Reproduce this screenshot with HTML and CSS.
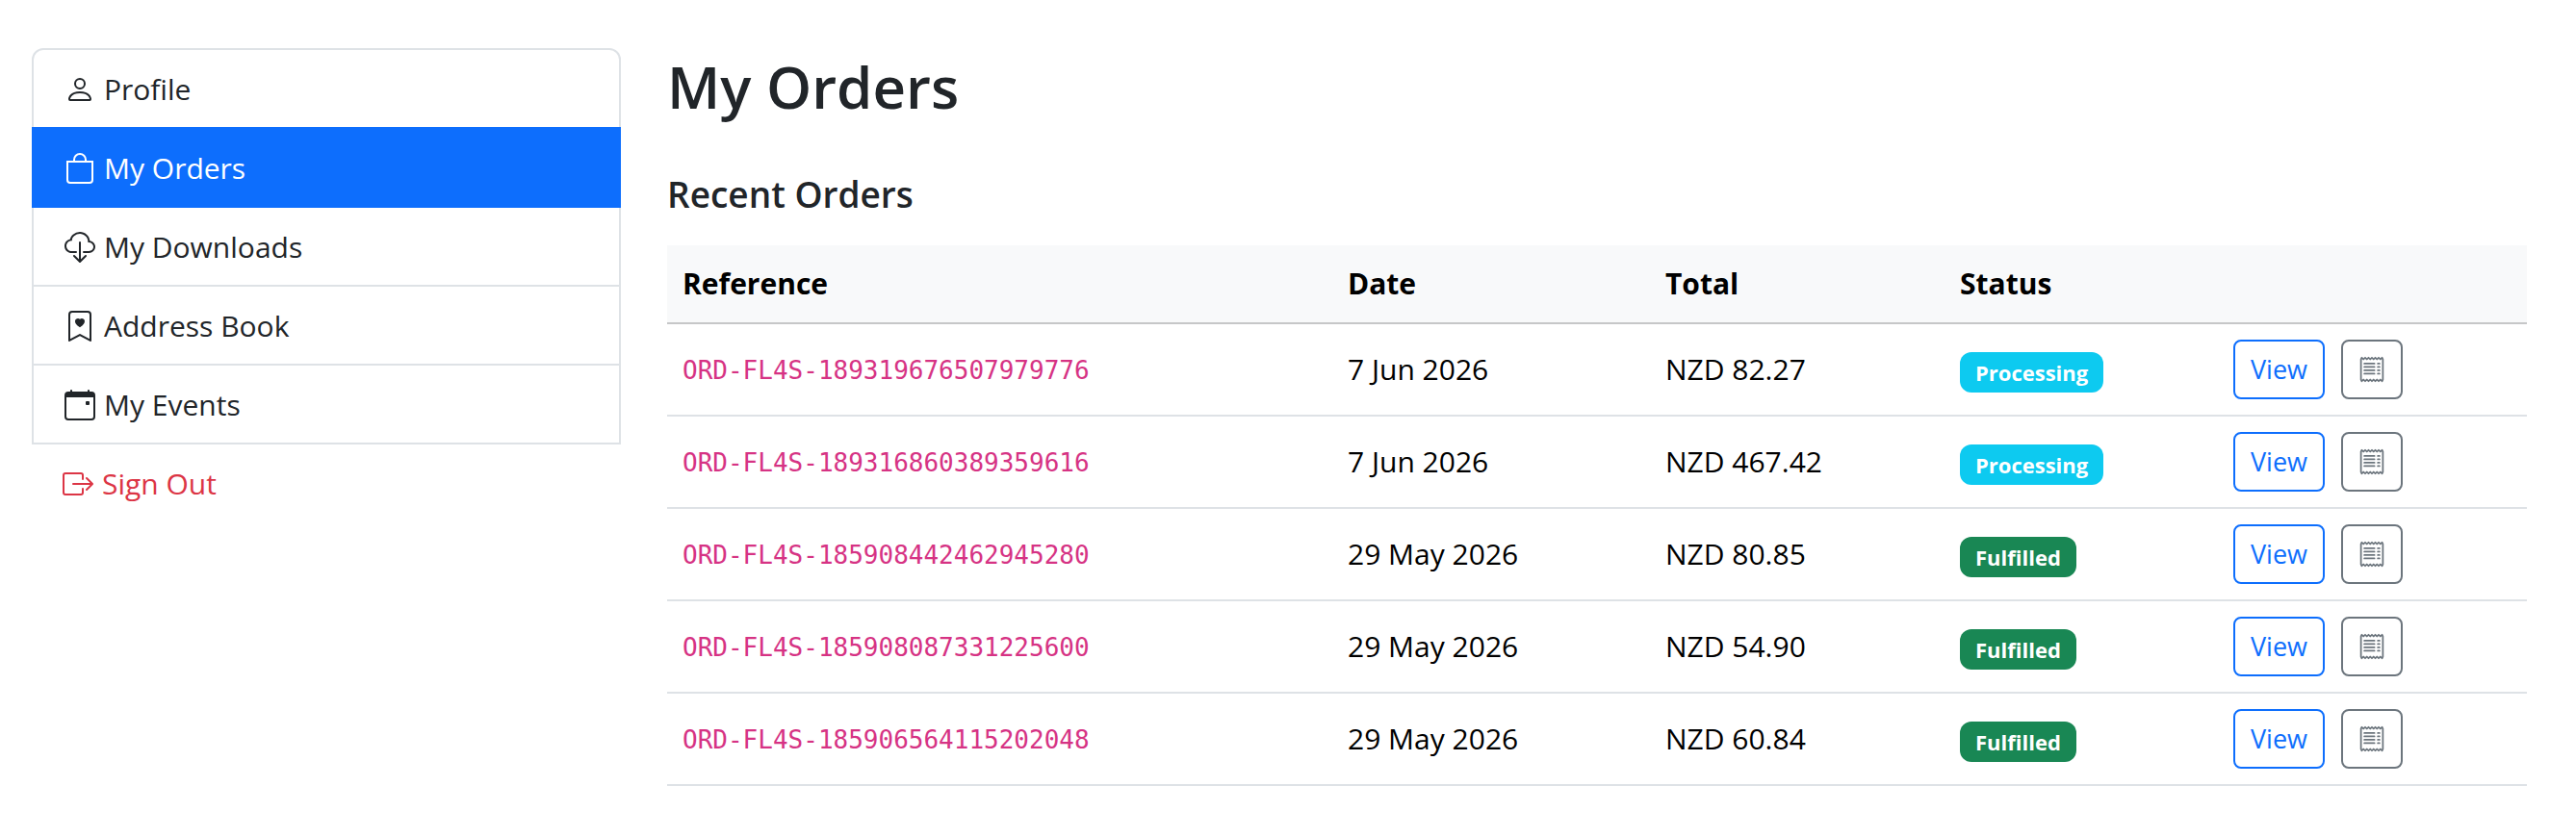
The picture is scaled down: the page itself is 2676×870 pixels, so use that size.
FILE: index.html
```html
<!DOCTYPE html>
<html lang="en">
<head>
    <meta charset="UTF-8">
    <meta name="viewport" content="width=device-width, initial-scale=1.0">
    <title>My Orders</title>
    <link rel="stylesheet" href="styles.css">
</head>
<body>
    <!-- shared icon -->
    <svg class="sprite" aria-hidden="true">
        <symbol id="receipt" viewBox="0 0 16 16">
            <path d="M1.92.506a.5.5 0 0 1 .434.14L3 1.293l.646-.647a.5.5 0 0 1 .708 0L5 1.293l.646-.647a.5.5 0 0 1 .708 0L7 1.293l.646-.647a.5.5 0 0 1 .708 0L9 1.293l.646-.647a.5.5 0 0 1 .708 0l.646.647.646-.647a.5.5 0 0 1 .708 0l.646.647.646-.647a.5.5 0 0 1 .801.13l.5 1A.5.5 0 0 1 15 2v12a.5.5 0 0 1-.053.224l-.5 1a.5.5 0 0 1-.8.13L13 14.707l-.646.647a.5.5 0 0 1-.708 0L11 14.707l-.646.647a.5.5 0 0 1-.708 0L9 14.707l-.646.647a.5.5 0 0 1-.708 0L7 14.707l-.646.647a.5.5 0 0 1-.708 0L5 14.707l-.646.647a.5.5 0 0 1-.708 0L3 14.707l-.646.647a.5.5 0 0 1-.801-.13l-.5-1A.5.5 0 0 1 1 14V2a.5.5 0 0 1 .053-.224l.5-1a.5.5 0 0 1 .367-.27m.217 1.338L2 2.118v11.764l.137.274.51-.51a.5.5 0 0 1 .707 0l.646.647.646-.646a.5.5 0 0 1 .708 0l.646.646.646-.646a.5.5 0 0 1 .708 0l.646.646.646-.646a.5.5 0 0 1 .708 0l.646.646.646-.646a.5.5 0 0 1 .708 0l.646.646.646-.646a.5.5 0 0 1 .708 0l.509.509.137-.274V2.118l-.137-.274-.51.51a.5.5 0 0 1-.707 0L12 1.707l-.646.647a.5.5 0 0 1-.708 0L10 1.707l-.646.647a.5.5 0 0 1-.708 0L8 1.707l-.646.647a.5.5 0 0 1-.708 0L6 1.707l-.646.647a.5.5 0 0 1-.708 0L4 1.707l-.646.647a.5.5 0 0 1-.708 0z"/>
            <path d="M3 4.5a.5.5 0 0 1 .5-.5h6a.5.5 0 1 1 0 1h-6a.5.5 0 0 1-.5-.5m0 2a.5.5 0 0 1 .5-.5h6a.5.5 0 1 1 0 1h-6a.5.5 0 0 1-.5-.5m0 2a.5.5 0 0 1 .5-.5h6a.5.5 0 1 1 0 1h-6a.5.5 0 0 1-.5-.5m0 2a.5.5 0 0 1 .5-.5h6a.5.5 0 0 1 0 1h-6a.5.5 0 0 1-.5-.5m8-6a.5.5 0 0 1 .5-.5h1a.5.5 0 0 1 0 1h-1a.5.5 0 0 1-.5-.5m0 2a.5.5 0 0 1 .5-.5h1a.5.5 0 0 1 0 1h-1a.5.5 0 0 1-.5-.5m0 2a.5.5 0 0 1 .5-.5h1a.5.5 0 0 1 0 1h-1a.5.5 0 0 1-.5-.5m0 2a.5.5 0 0 1 .5-.5h1a.5.5 0 0 1 0 1h-1a.5.5 0 0 1-.5-.5"/>
        </symbol>
    </svg>

    <div class="container">
        <nav class="sidebar">
            <div class="list-group">
                <a href="#" class="list-item">
                    <svg class="icon" viewBox="0 0 16 16"><path d="M8 8a3 3 0 1 0 0-6 3 3 0 0 0 0 6m2-3a2 2 0 1 1-4 0 2 2 0 0 1 4 0m4 8c0 1-1 1-1 1H3s-1 0-1-1 1-4 6-4 6 3 6 4m-1-.004c-.001-.246-.154-.986-.832-1.664C11.516 10.68 10.289 10 8 10s-3.516.68-4.168 1.332c-.678.678-.83 1.418-.832 1.664z"/></svg>
                    Profile
                </a>
                <a href="#" class="list-item active">
                    <svg class="icon" viewBox="0 0 16 16"><path d="M8 1a2.5 2.5 0 0 1 2.5 2.5V4h-5v-.5A2.5 2.5 0 0 1 8 1m3.500 3v-.5a3.500 3.500 0 1 0-7 0V4H1v10a2 2 0 0 0 2 2h10a2 2 0 0 0 2-2V4zM2 5h12v9a1 1 0 0 1-1 1H3a1 1 0 0 1-1-1z"/></svg>
                    My Orders
                </a>
                <a href="#" class="list-item">
                    <svg class="icon" viewBox="0 0 16 16"><path d="M4.406 1.342A5.530 5.530 0 0 1 8 0c2.690 0 4.923 2 5.166 4.579C14.758 4.804 16 6.137 16 7.773 16 9.569 14.502 11 12.687 11H10a.5.5 0 0 1 0-1h2.688C13.979 10 15 8.988 15 7.773c0-1.216-1.020-2.228-2.313-2.228h-.5v-.5C12.188 2.825 10.328 1 8 1a4.530 4.530 0 0 0-2.941 1.100c-.757.652-1.153 1.438-1.153 2.055v.448l-.445.049C2.064 4.805 1 5.952 1 7.318 1 8.785 2.230 10 3.781 10H6a.5.5 0 0 1 0 1H3.781C1.708 11 0 9.366 0 7.318c0-1.763 1.266-3.223 2.942-3.593.143-.863.698-1.723 1.464-2.383"/><path d="M7.646 15.854a.5.5 0 0 0 .708 0l3-3a.5.5 0 0 0-.708-.708L8.500 14.293V5.500a.5.5 0 0 0-1 0v8.793l-2.146-2.147a.5.5 0 0 0-.708.708z"/></svg>
                    My Downloads
                </a>
                <a href="#" class="list-item">
                    <svg class="icon" viewBox="0 0 16 16"><path fill-rule="evenodd" d="M8 4.410c1.387-1.425 4.854 1.070 0 4.277C3.146 5.480 6.613 2.986 8 4.412z"/><path d="M2 2a2 2 0 0 1 2-2h8a2 2 0 0 1 2 2v13.500a.5.5 0 0 1-.777.416L8 13.101l-5.223 2.815A.5.5 0 0 1 2 15.500zm2-1a1 1 0 0 0-1 1v12.566l4.723-2.482a.5.5 0 0 1 .554 0L13 14.566V2a1 1 0 0 0-1-1z"/></svg>
                    Address Book
                </a>
                <a href="#" class="list-item">
                    <svg class="icon" viewBox="0 0 16 16"><path d="M11 6.500a.5.5 0 0 1 .5-.5h1a.5.5 0 0 1 .5.5v1a.5.5 0 0 1-.5.5h-1a.5.5 0 0 1-.5-.5z"/><path d="M3.500 0a.5.5 0 0 1 .5.5V1h8V.5a.5.5 0 0 1 1 0V1h1a2 2 0 0 1 2 2v11a2 2 0 0 1-2 2H2a2 2 0 0 1-2-2V3a2 2 0 0 1 2-2h1V.5a.5.5 0 0 1 .5-.5M1 4v10a1 1 0 0 0 1 1h12a1 1 0 0 0 1-1V4z"/></svg>
                    My Events
                </a>
            </div>
            <button type="button" class="sign-out">
                <svg class="icon" viewBox="0 0 16 16"><path fill-rule="evenodd" d="M10 12.500a.5.5 0 0 1-.5.5h-8a.5.5 0 0 1-.5-.5v-9a.5.5 0 0 1 .5-.5h8a.5.5 0 0 1 .5.5v2a.5.5 0 0 0 1 0v-2A1.500 1.500 0 0 0 9.500 2h-8A1.500 1.500 0 0 0 0 3.500v9A1.500 1.500 0 0 0 1.500 14h8a1.500 1.500 0 0 0 1.500-1.500v-2a.5.5 0 0 0-1 0z"/><path fill-rule="evenodd" d="M15.854 8.354a.5.5 0 0 0 0-.708l-3-3a.5.5 0 0 0-.708.708L14.293 7.500H5.500a.5.5 0 0 0 0 1h8.793l-2.147 2.146a.5.5 0 0 0 .708.708z"/></svg>
                Sign Out
            </button>
        </nav>

        <main class="content">
            <h1>My Orders</h1>
            <h2>Recent Orders</h2>
            <table class="orders">
                <colgroup>
                    <col>
                    <col class="col-date">
                    <col class="col-total">
                    <col class="col-status">
                    <col class="col-actions">
                </colgroup>
                <thead>
                    <tr>
                        <th>Reference</th>
                        <th>Date</th>
                        <th>Total</th>
                        <th>Status</th>
                        <th></th>
                    </tr>
                </thead>
                <tbody>
                    <tr>
                        <td><code>ORD-FL4S-189319676507979776</code></td>
                        <td>7 Jun 2026</td>
                        <td>NZD 82.27</td>
                        <td><span class="badge processing">Processing</span></td>
                        <td>
                            <div class="actions">
                                <a href="#" class="btn btn-view">View</a>
                                <a href="#" class="btn btn-receipt" aria-label="Receipt"><svg><use href="#receipt"/></svg></a>
                            </div>
                        </td>
                    </tr>
                    <tr>
                        <td><code>ORD-FL4S-189316860389359616</code></td>
                        <td>7 Jun 2026</td>
                        <td>NZD 467.42</td>
                        <td><span class="badge processing">Processing</span></td>
                        <td>
                            <div class="actions">
                                <a href="#" class="btn btn-view">View</a>
                                <a href="#" class="btn btn-receipt" aria-label="Receipt"><svg><use href="#receipt"/></svg></a>
                            </div>
                        </td>
                    </tr>
                    <tr>
                        <td><code>ORD-FL4S-185908442462945280</code></td>
                        <td>29 May 2026</td>
                        <td>NZD 80.85</td>
                        <td><span class="badge fulfilled">Fulfilled</span></td>
                        <td>
                            <div class="actions">
                                <a href="#" class="btn btn-view">View</a>
                                <a href="#" class="btn btn-receipt" aria-label="Receipt"><svg><use href="#receipt"/></svg></a>
                            </div>
                        </td>
                    </tr>
                    <tr>
                        <td><code>ORD-FL4S-185908087331225600</code></td>
                        <td>29 May 2026</td>
                        <td>NZD 54.90</td>
                        <td><span class="badge fulfilled">Fulfilled</span></td>
                        <td>
                            <div class="actions">
                                <a href="#" class="btn btn-view">View</a>
                                <a href="#" class="btn btn-receipt" aria-label="Receipt"><svg><use href="#receipt"/></svg></a>
                            </div>
                        </td>
                    </tr>
                    <tr>
                        <td><code>ORD-FL4S-185906564115202048</code></td>
                        <td>29 May 2026</td>
                        <td>NZD 60.84</td>
                        <td><span class="badge fulfilled">Fulfilled</span></td>
                        <td>
                            <div class="actions">
                                <a href="#" class="btn btn-view">View</a>
                                <a href="#" class="btn btn-receipt" aria-label="Receipt"><svg><use href="#receipt"/></svg></a>
                            </div>
                        </td>
                    </tr>
                </tbody>
            </table>
        </main>
    </div>
</body>
</html>
```
FILE: styles.css
```css
* {
    box-sizing: border-box;
}
body {
    margin: 0;
    font-family: "Segoe UI", "Open Sans", sans-serif;
    font-size: 30px;
    line-height: 48px;
    color: #212529;
    background: #fff;
}
a {
    color: inherit;
    text-decoration: none;
}
.sprite {
    display: none;
}
.container {
    display: flex;
    padding: 50px 27px 50px 9px;
}
.sidebar {
    flex: 0 0 25%;
    padding: 0 24px;
}
.content {
    flex: 1;
    min-width: 0;
    padding: 0 24px;
}

/* account menu */
.list-group {
    border: 2px solid #dee2e6;
    border-radius: 12px 12px 0 0;
}
.list-item,
.sign-out {
    display: flex;
    align-items: center;
    gap: 9px;
    padding: 17px 32px 15px;
}
.list-item + .list-item {
    border-top: 2px solid #dee2e6;
}
.list-item.active {
    margin: 0 -2px;
    padding: 17px 34px 15px;
    color: #fff;
    background: #0d6efd;
    border-top-color: #0d6efd;
    border-bottom: 2px solid #0d6efd;
}
.list-item.active + .list-item {
    border-top: none;
}
.icon {
    width: 32px;
    height: 32px;
    fill: currentColor;
}
.sign-out {
    width: 100%;
    border: none;
    background: none;
    font: inherit;
    color: #dc3545;
    cursor: pointer;
}

h1,
h2 {
    margin: 0;
    font-weight: 600;
}
h1 {
    margin-bottom: 48px;
    font-size: 60px;
    line-height: 80px;
}
h2 {
    margin-bottom: 29px;
    font-size: 37px;
    line-height: 48px;
}

/* orders table */
.orders {
    width: 100%;
    table-layout: fixed;
    border-collapse: separate;
    border-spacing: 0;
    color: #000;
}
.col-date {
    width: 330px;
}
.col-total {
    width: 306px;
}
.col-status {
    width: 284px;
}
.col-actions {
    width: 321px;
}
th,
td {
    padding: 16px;
    text-align: left;
    vertical-align: middle;
    border-bottom: 2px solid #dee2e6;
}
th {
    background: #f8f9fa;
    border-color: #c6c7c8;
}
code {
    font-family: Consolas, "DejaVu Sans Mono", monospace;
    font-size: 26px;
    color: #d63384;
}
.badge {
    display: inline-block;
    padding: 9px 16px;
    border-radius: 12px;
    font-size: 22px;
    font-weight: 700;
    line-height: 24px;
    color: #fff;
    vertical-align: middle;
}
.processing {
    background: #0dcaf0;
}
.fulfilled {
    background: #198754;
}
.actions {
    display: flex;
    gap: 17px;
}
.btn {
    display: flex;
    align-items: center;
    height: 62px;
    padding: 0 16px;
    border: 2px solid;
    border-radius: 8px;
    font-size: 27px;
}
.btn-view {
    color: #0d6efd;
}
.btn-receipt {
    color: #6c757d;
}
.btn-receipt svg {
    width: 28px;
    height: 28px;
    fill: currentColor;
}
```
